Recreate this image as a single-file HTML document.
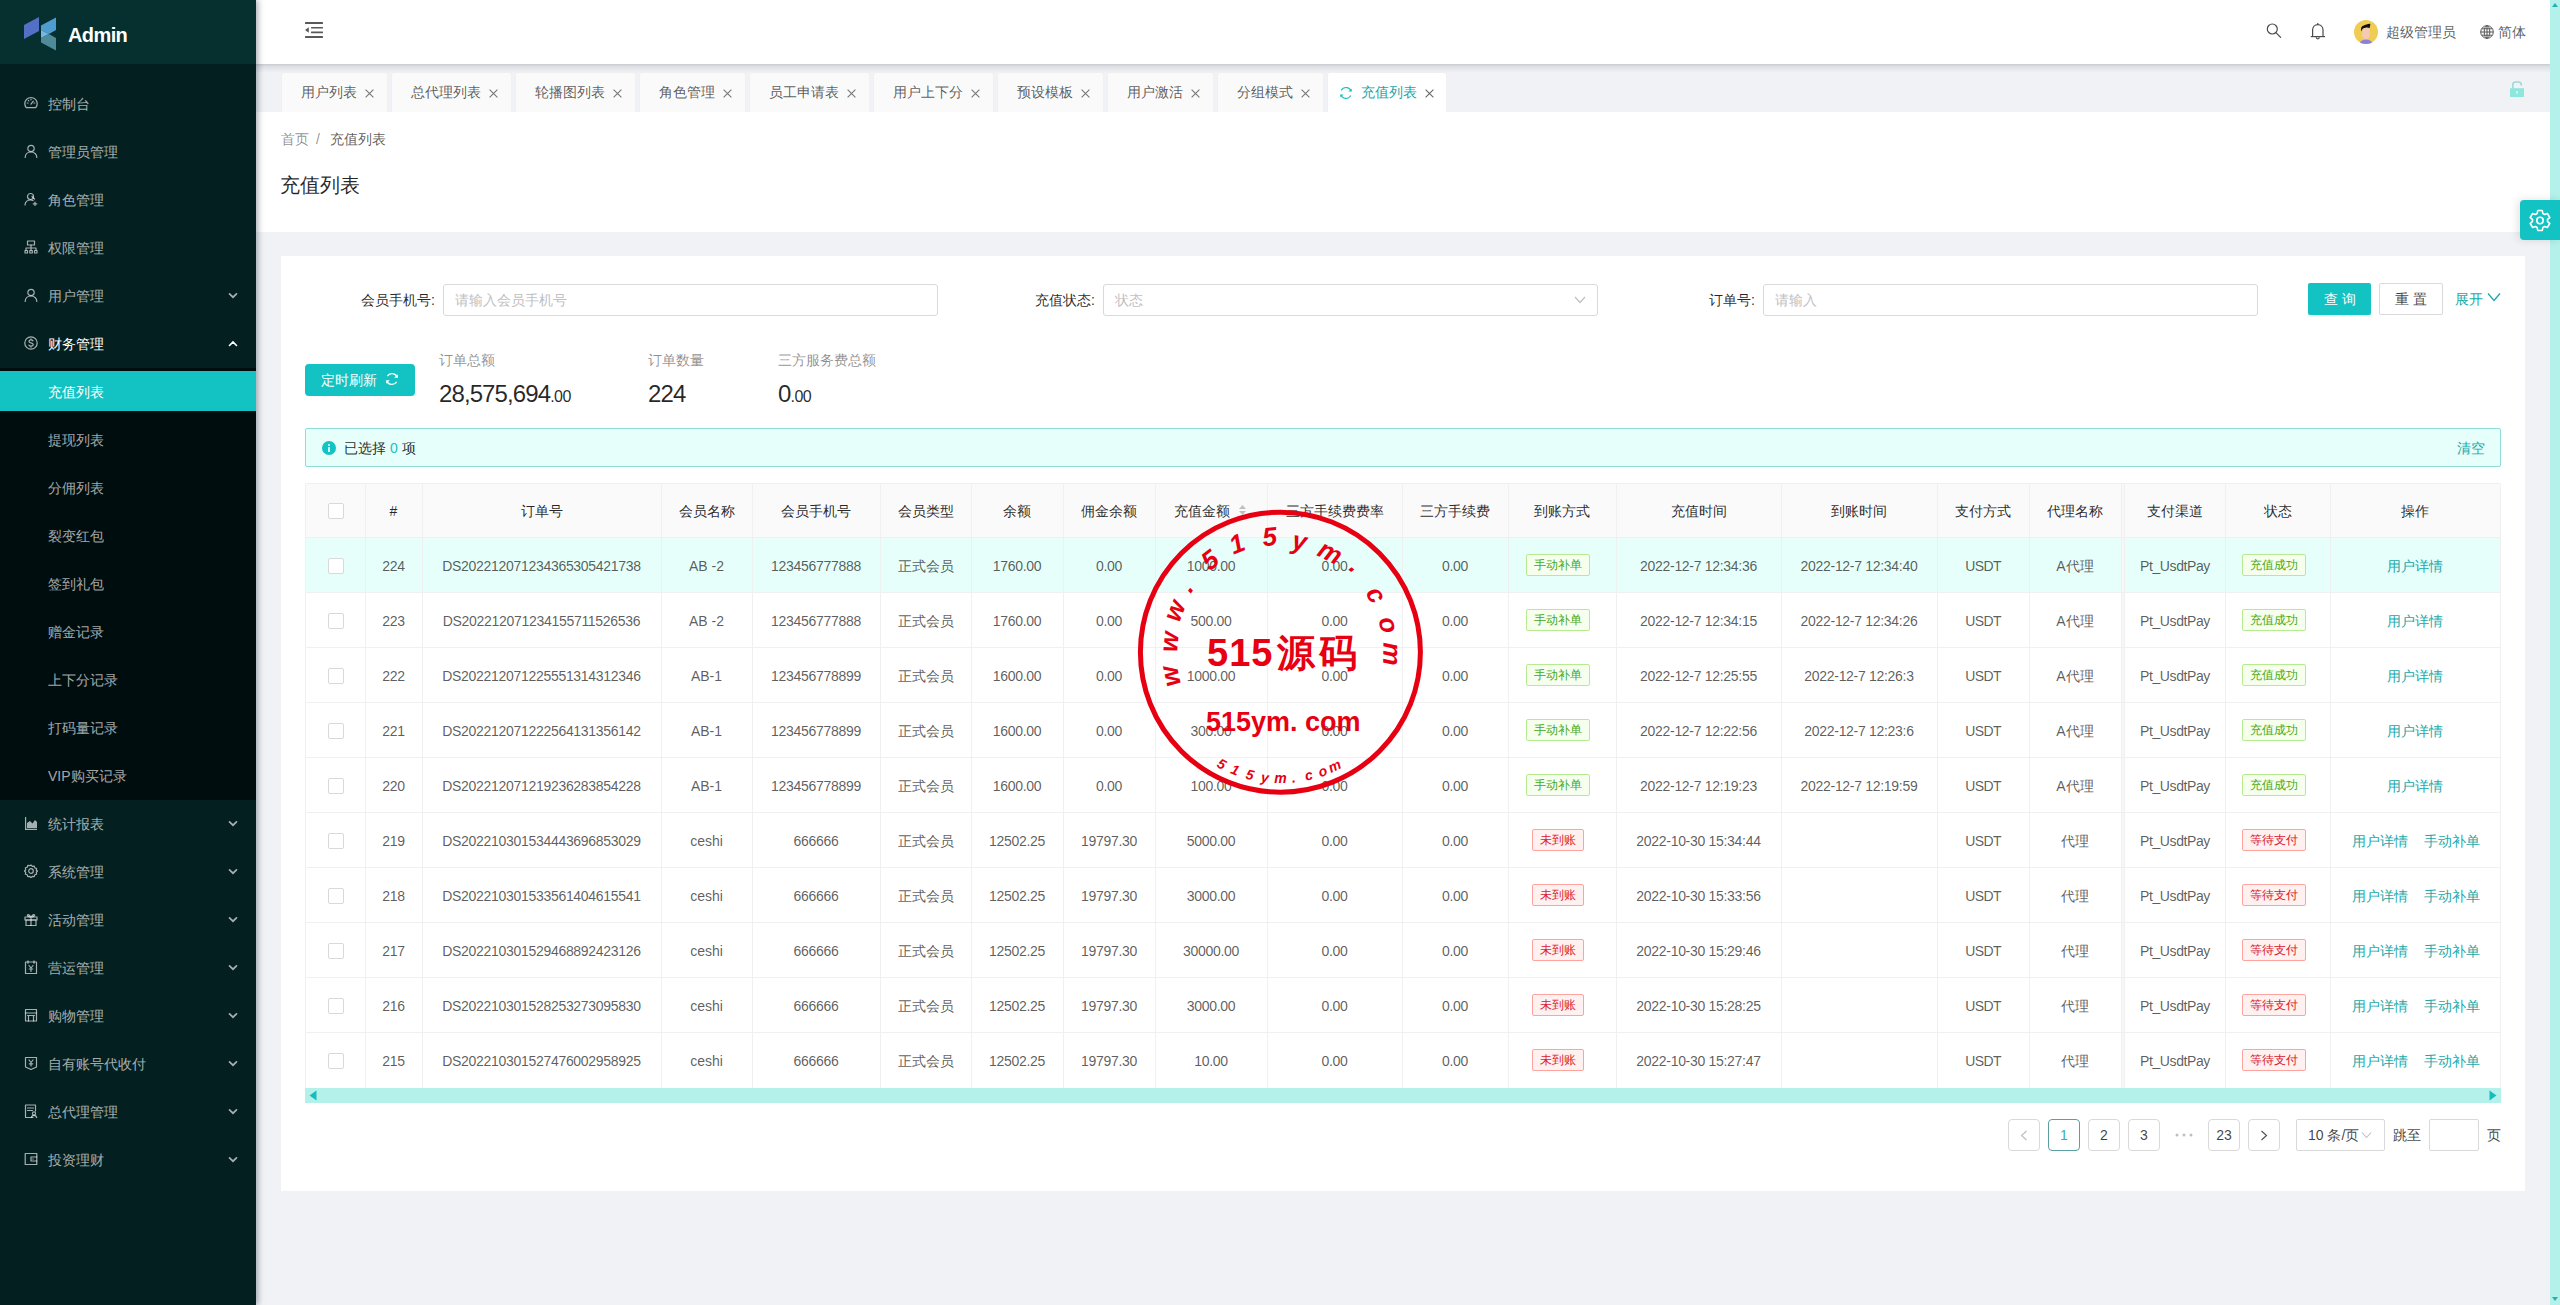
<!DOCTYPE html><html><head><meta charset="utf-8"><style>
*{box-sizing:border-box;margin:0;padding:0}
html,body{width:2560px;height:1305px;overflow:hidden;background:#f0f2f5;font-family:"Liberation Sans",sans-serif;font-size:14px;color:rgba(0,0,0,.65);font-weight:500}
.abs{position:absolute}
#side{position:absolute;left:0;top:0;width:256px;height:1305px;background:#041f20;z-index:5;box-shadow:2px 0 6px rgba(0,21,41,.35)}
#logo{position:absolute;left:0;top:0;width:256px;height:64px;background:#05302f}
#logo .t{position:absolute;left:68px;top:21px;font-size:20px;font-weight:bold;color:#fff;line-height:28px;letter-spacing:-0.6px}
.mi{position:absolute;left:0;width:256px;height:40px;line-height:40px;color:rgba(255,255,255,.65);white-space:nowrap}
.mi svg.ic{position:absolute;left:24px;top:13px}
.mi .tx{position:absolute;left:48px;top:1px}
.mi svg.ar{position:absolute;left:228px;top:17px}
.mi.on{background:#13c2c2;color:#fff}
.mi.open{color:#fff}
#sub{position:absolute;left:0;top:368px;width:256px;height:432px;background:#000d0f}
#hdr{position:absolute;left:256px;top:0;width:2294px;height:64px;background:#fff;box-shadow:0 1px 2px rgba(0,21,41,.08);z-index:3}
#tabs{position:absolute;left:256px;top:64px;width:2294px;height:48px;background:#f0f2f5}
#tsh{position:absolute;left:256px;top:64px;width:2294px;height:9px;background:linear-gradient(rgba(0,10,30,.11),rgba(0,10,30,0));z-index:2}
.tab{position:absolute;top:8px;height:40px;background:#fafafa;border:1px solid #f0f0f0;border-bottom:none;border-radius:3px 3px 0 0;line-height:40px;color:rgba(0,0,0,.65);white-space:nowrap}
.tab .tt{position:absolute;left:19px;top:-1px}
.tab svg.x{position:absolute;top:16px}
.tab.act{background:#fff;color:#13c2c2}
#ph{position:absolute;left:256px;top:112px;width:2294px;height:120px;background:#fff}
#card{position:absolute;left:281px;top:256px;width:2244px;height:935px;background:#fff}
#vs{position:absolute;left:2550px;top:0;width:10px;height:1305px;background:#b3f1ea;z-index:6}
#gear{position:absolute;left:2520px;top:200px;width:40px;height:40px;background:#13c2c2;border-radius:4px 0 0 4px;z-index:7;box-shadow:-2px 0 8px rgba(0,0,0,.12)}
.t14{font-size:14px;line-height:22px;white-space:nowrap}
</style></head><body>
<div id="side"><div id="logo">
<svg class="abs" style="left:24px;top:17px" width="33" height="34" viewBox="0 0 33 34"><polygon points="0,8 15,0 15,14 0,22" fill="#5470c6"/><polygon points="17,8.5 32,0.5 32,13 25,17 17,13" fill="#4f9dd0"/><polygon points="17,13 25,17 17,21" fill="#74b6e4"/><polygon points="17,21 25,17 32,21 32,33.5 17,25.5" fill="#4f8a9a"/></svg>
<div class="t">Admin</div></div><div id="sub"></div>
<div class="mi" style="top:83px"><svg class="ic" width="14" height="14" viewBox="0 0 14 14" ><g fill="none" stroke="rgba(255,255,255,.65)" stroke-width="1.2" stroke-linecap="round" stroke-linejoin="round"><path d="M2.2 11.6A6.2 6.2 0 1 1 11.8 11.6Z"/><path d="M7 8.2L9.3 5.2"/><path d="M3.2 7h.8M4.3 4.3l.5.5M7 3v.8M10.8 7h-.8"/></g></svg><span class="tx">控制台</span></div>
<div class="mi" style="top:131px"><svg class="ic" width="14" height="14" viewBox="0 0 14 14" ><g fill="none" stroke="rgba(255,255,255,.65)" stroke-width="1.2" stroke-linecap="round" stroke-linejoin="round"><circle cx="7" cy="4.5" r="3.2"/><path d="M1.2 13.5c0-3.3 2.6-5.5 5.8-5.5s5.8 2.2 5.8 5.5"/></g></svg><span class="tx">管理员管理</span></div>
<div class="mi" style="top:179px"><svg class="ic" width="14" height="14" viewBox="0 0 14 14" ><g fill="none" stroke="rgba(255,255,255,.65)" stroke-width="1.2" stroke-linecap="round" stroke-linejoin="round"><circle cx="6.5" cy="4.5" r="3"/><path d="M1 13c.3-3 2.5-5 5.5-5 1 0 1.8.2 2.5.6"/><path d="M8 4.5l2.5 2.5"/><path d="M11 10v3.5M9.2 11.8h3.6"/></g></svg><span class="tx">角色管理</span></div>
<div class="mi" style="top:227px"><svg class="ic" width="14" height="14" viewBox="0 0 14 14" ><g fill="none" stroke="rgba(255,255,255,.65)" stroke-width="1.2" stroke-linecap="round" stroke-linejoin="round"><rect x="3.5" y="1" width="7" height="4"/><path d="M7 5v3M2 8h10M2 8v2M7 8v2M12 8v2"/><rect x="1" y="10.5" width="2.5" height="2.5"/><rect x="5.8" y="10.5" width="2.5" height="2.5"/><rect x="10.5" y="10.5" width="2.5" height="2.5"/></g></svg><span class="tx">权限管理</span></div>
<div class="mi" style="top:275px"><svg class="ic" width="14" height="14" viewBox="0 0 14 14" ><g fill="none" stroke="rgba(255,255,255,.65)" stroke-width="1.2" stroke-linecap="round" stroke-linejoin="round"><circle cx="7" cy="4.5" r="3.2"/><path d="M1.2 13.5c0-3.3 2.6-5.5 5.8-5.5s5.8 2.2 5.8 5.5"/></g></svg><span class="tx">用户管理</span><svg class="ar" width="10" height="7" viewBox="0 0 10 7"><path d="M1.5 1.8L5 5.2l3.5-3.4" fill="none" stroke="rgba(255,255,255,.65)" stroke-width="1.7" stroke-linecap="round"/></svg></div>
<div class="mi open" style="top:323px"><svg class="ic" width="14" height="14" viewBox="0 0 14 14" ><g fill="none" stroke="rgba(255,255,255,.65)" stroke-width="1.2" stroke-linecap="round" stroke-linejoin="round"><circle cx="7" cy="7" r="6.2"/><path d="M9 4.8c-.4-.6-1.1-.9-2-.9-1.2 0-2 .6-2 1.5 0 2 4.2 1.1 4.2 3.2 0 .9-.9 1.5-2.2 1.5-.9 0-1.7-.4-2.1-1M7 2.8v1.1M7 10.1v1.1"/></g></svg><span class="tx">财务管理</span><svg class="ar" width="10" height="7" viewBox="0 0 10 7"><path d="M1.5 5.5L5 2l3.5 3.5" fill="none" stroke="#fff" stroke-width="1.6" stroke-linecap="round"/></svg></div>
<div class="mi on" style="top:371px"><span class="tx">充值列表</span></div>
<div class="mi" style="top:419px"><span class="tx">提现列表</span></div>
<div class="mi" style="top:467px"><span class="tx">分佣列表</span></div>
<div class="mi" style="top:515px"><span class="tx">裂变红包</span></div>
<div class="mi" style="top:563px"><span class="tx">签到礼包</span></div>
<div class="mi" style="top:611px"><span class="tx">赠金记录</span></div>
<div class="mi" style="top:659px"><span class="tx">上下分记录</span></div>
<div class="mi" style="top:707px"><span class="tx">打码量记录</span></div>
<div class="mi" style="top:755px"><span class="tx">VIP购买记录</span></div>
<div class="mi" style="top:803px"><svg class="ic" width="14" height="14" viewBox="0 0 14 14" ><g fill="rgba(255,255,255,.65)"><path d="M1 1h1.2v11.8H13V14H1z"/><path d="M3 12l0-5 3 -2 2.5 2.5L11 4l2 2v6z"/></g></svg><span class="tx">统计报表</span><svg class="ar" width="10" height="7" viewBox="0 0 10 7"><path d="M1.5 1.8L5 5.2l3.5-3.4" fill="none" stroke="rgba(255,255,255,.65)" stroke-width="1.7" stroke-linecap="round"/></svg></div>
<div class="mi" style="top:851px"><svg class="ic" width="14" height="14" viewBox="0 0 14 14" ><g fill="none" stroke="rgba(255,255,255,.65)" stroke-width="1.2" stroke-linecap="round" stroke-linejoin="round"><path d="M7 1l1.3 1.4 1.9-.3.6 1.8 1.8.6-.3 1.9L13.7 7l-1.4 1.3.3 1.9-1.8.6-.6 1.8-1.9-.3L7 13.7l-1.3-1.4-1.9.3-.6-1.8-1.8-.6.3-1.9L.3 7l1.4-1.3-.3-1.9 1.8-.6.6-1.8 1.9.3z"/><circle cx="7" cy="7" r="2.3"/></g></svg><span class="tx">系统管理</span><svg class="ar" width="10" height="7" viewBox="0 0 10 7"><path d="M1.5 1.8L5 5.2l3.5-3.4" fill="none" stroke="rgba(255,255,255,.65)" stroke-width="1.7" stroke-linecap="round"/></svg></div>
<div class="mi" style="top:899px"><svg class="ic" width="14" height="14" viewBox="0 0 14 14" ><g fill="none" stroke="rgba(255,255,255,.65)" stroke-width="1.2" stroke-linecap="round" stroke-linejoin="round"><rect x="1" y="5" width="12" height="3"/><rect x="2" y="8" width="10" height="5.5"/><path d="M7 5v8.5M7 5C5.5 3 4 2 3.5 3S5 5 7 5M7 5c1.5-2 3-3 3.5-2S9 5 7 5"/></g></svg><span class="tx">活动管理</span><svg class="ar" width="10" height="7" viewBox="0 0 10 7"><path d="M1.5 1.8L5 5.2l3.5-3.4" fill="none" stroke="rgba(255,255,255,.65)" stroke-width="1.7" stroke-linecap="round"/></svg></div>
<div class="mi" style="top:947px"><svg class="ic" width="14" height="14" viewBox="0 0 14 14" ><g fill="none" stroke="rgba(255,255,255,.65)" stroke-width="1.2" stroke-linecap="round" stroke-linejoin="round"><rect x="1.5" y="2" width="11" height="11.5"/><path d="M4 .8v2.4M10 .8v2.4M5 5.5L7 8l2-2.5M7 8v3.5M5.2 9h3.6"/></g></svg><span class="tx">营运管理</span><svg class="ar" width="10" height="7" viewBox="0 0 10 7"><path d="M1.5 1.8L5 5.2l3.5-3.4" fill="none" stroke="rgba(255,255,255,.65)" stroke-width="1.7" stroke-linecap="round"/></svg></div>
<div class="mi" style="top:995px"><svg class="ic" width="14" height="14" viewBox="0 0 14 14" ><g fill="none" stroke="rgba(255,255,255,.65)" stroke-width="1.2" stroke-linecap="round" stroke-linejoin="round"><rect x="1.5" y="1.5" width="11" height="11.5"/><path d="M1.5 5h11M3.5 7.5h7M4.5 7.5v5.5M9.5 7.5v5.5"/></g></svg><span class="tx">购物管理</span><svg class="ar" width="10" height="7" viewBox="0 0 10 7"><path d="M1.5 1.8L5 5.2l3.5-3.4" fill="none" stroke="rgba(255,255,255,.65)" stroke-width="1.7" stroke-linecap="round"/></svg></div>
<div class="mi" style="top:1043px"><svg class="ic" width="14" height="14" viewBox="0 0 14 14" ><g fill="none" stroke="rgba(255,255,255,.65)" stroke-width="1.2" stroke-linecap="round" stroke-linejoin="round"><path d="M1.5 1.5h11V11L7 13.5 1.5 11z"/><path d="M5 4l2 2.5L9 4M7 6.5v3.5M5.3 7.8h3.4"/></g></svg><span class="tx">自有账号代收付</span><svg class="ar" width="10" height="7" viewBox="0 0 10 7"><path d="M1.5 1.8L5 5.2l3.5-3.4" fill="none" stroke="rgba(255,255,255,.65)" stroke-width="1.7" stroke-linecap="round"/></svg></div>
<div class="mi" style="top:1091px"><svg class="ic" width="14" height="14" viewBox="0 0 14 14" ><g fill="none" stroke="rgba(255,255,255,.65)" stroke-width="1.2" stroke-linecap="round" stroke-linejoin="round"><path d="M9 13.5H1.5V1h10v6"/><path d="M3.5 4h6M3.5 6.5h5"/><circle cx="10" cy="9.5" r="1.6"/><path d="M7.3 13.8c.3-1.5 1.3-2.4 2.7-2.4s2.4.9 2.7 2.4"/></g></svg><span class="tx">总代理管理</span><svg class="ar" width="10" height="7" viewBox="0 0 10 7"><path d="M1.5 1.8L5 5.2l3.5-3.4" fill="none" stroke="rgba(255,255,255,.65)" stroke-width="1.7" stroke-linecap="round"/></svg></div>
<div class="mi" style="top:1139px"><svg class="ic" width="14" height="14" viewBox="0 0 14 14" ><g fill="none" stroke="rgba(255,255,255,.65)" stroke-width="1.2" stroke-linecap="round" stroke-linejoin="round"><rect x="1.2" y="1.5" width="11.6" height="11"/><path d="M12.8 5H7v4h5.8"/><path d="M8.8 7h.4"/></g></svg><span class="tx">投资理财</span><svg class="ar" width="10" height="7" viewBox="0 0 10 7"><path d="M1.5 1.8L5 5.2l3.5-3.4" fill="none" stroke="rgba(255,255,255,.65)" stroke-width="1.7" stroke-linecap="round"/></svg></div>
</div>
<div id="hdr">
<svg class="abs" style="left:49px;top:21px" width="20" height="18" viewBox="0 0 20 18"><g fill="#595959"><rect x="0" y="1" width="18" height="2" rx=".5"/><rect x="6" y="6" width="12" height="1.6" rx=".5"/><rect x="6" y="10.6" width="12" height="1.6" rx=".5"/><rect x="0" y="15" width="18" height="2" rx=".5"/><path d="M0 9L3.8 6.2V11.8Z"/></g></svg>
<svg class="abs" style="left:2009px;top:21px" width="20" height="20" viewBox="0 0 20 20"><g fill="none" stroke="#4a4a4a" stroke-width="1.2"><circle cx="7.3" cy="8" r="5"/><path d="M10.9 11.6L15.6 16.4" stroke-linecap="round"/></g></svg>
<svg class="abs" style="left:2054px;top:21px" width="16" height="20" viewBox="0 0 16 20"><g fill="none" stroke="#4a4a4a" stroke-width="1.2"><path d="M2.6 15.5V9c0-3.2 2.3-5.3 5.2-5.3s5.2 2.1 5.2 5.3v6.5"/><path d="M.8 15.6h14.2"/><path d="M7.8 2v1.6"/><path d="M6.3 16.3a1.5 1.5 0 0 0 3 0"/></g></svg>
<svg class="abs" style="left:2098px;top:20px" width="24" height="24" viewBox="0 0 24 24"><defs><clipPath id="cav"><circle cx="12" cy="12" r="12"/></clipPath></defs><g clip-path="url(#cav)"><rect width="24" height="24" fill="#efcd55"/><path d="M5 24c1-3 3.5-4.5 7-4.5s6 1.5 7 4.5z" fill="#8b80d8"/><path d="M8.5 8.5c0-.5.5-1.5 3.5-2 2.5-.2 3.8 1 3.8 2.5v5c0 3-1.8 5.2-3.8 5.2s-3.5-1.6-3.8-3.5z" fill="#f3cbb5"/><path d="M7.5 11.5c-.8-2.5-.6-4.5 1-5.5 1.5-1 4-1.5 6.8-2.3.8-.2 1.2.3 1 1l-.8 3.5c-.8-.6-2-.8-4-.5-1.5.2-2.6.6-3.2 1.5z" fill="#111"/></g></svg>
<div class="abs t14" style="left:2130px;top:21px;color:rgba(0,0,0,.65)">超级管理员</div>
<svg class="abs" style="left:2224px;top:25px" width="14" height="14" viewBox="0 0 14 14"><g fill="none" stroke="#555" stroke-width="1"><circle cx="7" cy="7" r="6.3"/><ellipse cx="7" cy="7" rx="2.8" ry="6.3"/><path d="M.8 7h12.4M1.8 3.8h10.4M1.8 10.2h10.4M7 .7v12.6"/></g></svg>
<div class="abs t14" style="left:2242px;top:21px;color:rgba(0,0,0,.65)">简体</div>
</div>
<div id="tsh"></div><div id="tabs">
<div class="tab" style="left:25px;width:107px"><span class="tt">用户列表</span><svg class="x" style="left:83px" width="9" height="9" viewBox="0 0 9 9"><path d="M.6 .6l7.8 7.8M8.4 .6L.6 8.4" stroke="#777" stroke-width="1.1"/></svg></div>
<div class="tab" style="left:135px;width:121px"><span class="tt">总代理列表</span><svg class="x" style="left:97px" width="9" height="9" viewBox="0 0 9 9"><path d="M.6 .6l7.8 7.8M8.4 .6L.6 8.4" stroke="#777" stroke-width="1.1"/></svg></div>
<div class="tab" style="left:259px;width:121px"><span class="tt">轮播图列表</span><svg class="x" style="left:97px" width="9" height="9" viewBox="0 0 9 9"><path d="M.6 .6l7.8 7.8M8.4 .6L.6 8.4" stroke="#777" stroke-width="1.1"/></svg></div>
<div class="tab" style="left:383px;width:107px"><span class="tt">角色管理</span><svg class="x" style="left:83px" width="9" height="9" viewBox="0 0 9 9"><path d="M.6 .6l7.8 7.8M8.4 .6L.6 8.4" stroke="#777" stroke-width="1.1"/></svg></div>
<div class="tab" style="left:493px;width:121px"><span class="tt">员工申请表</span><svg class="x" style="left:97px" width="9" height="9" viewBox="0 0 9 9"><path d="M.6 .6l7.8 7.8M8.4 .6L.6 8.4" stroke="#777" stroke-width="1.1"/></svg></div>
<div class="tab" style="left:617px;width:121px"><span class="tt">用户上下分</span><svg class="x" style="left:97px" width="9" height="9" viewBox="0 0 9 9"><path d="M.6 .6l7.8 7.8M8.4 .6L.6 8.4" stroke="#777" stroke-width="1.1"/></svg></div>
<div class="tab" style="left:741px;width:107px"><span class="tt">预设模板</span><svg class="x" style="left:83px" width="9" height="9" viewBox="0 0 9 9"><path d="M.6 .6l7.8 7.8M8.4 .6L.6 8.4" stroke="#777" stroke-width="1.1"/></svg></div>
<div class="tab" style="left:851px;width:107px"><span class="tt">用户激活</span><svg class="x" style="left:83px" width="9" height="9" viewBox="0 0 9 9"><path d="M.6 .6l7.8 7.8M8.4 .6L.6 8.4" stroke="#777" stroke-width="1.1"/></svg></div>
<div class="tab" style="left:961px;width:107px"><span class="tt">分组模式</span><svg class="x" style="left:83px" width="9" height="9" viewBox="0 0 9 9"><path d="M.6 .6l7.8 7.8M8.4 .6L.6 8.4" stroke="#777" stroke-width="1.1"/></svg></div>
<div class="tab act" style="left:1071px;width:120px"><svg class="abs" style="left:11px;top:13px" width="14" height="14" viewBox="0 0 14 14"><g fill="none" stroke="#13c2c2" stroke-width="1.1"><path d="M12.3 5.2A5.6 5.6 0 0 0 2.2 4.4"/><path d="M1.7 8.8a5.6 5.6 0 0 0 10.1.8"/></g><path d="M12.6 2.4v3.2H9.4z" fill="#13c2c2"/><path d="M1.4 11.6V8.4h3.2z" fill="#13c2c2"/></svg><span class="tt" style="left:33px;color:#1aa6a6">充值列表</span><svg class="x" style="left:97px" width="9" height="9" viewBox="0 0 9 9"><path d="M.6 .6l7.8 7.8M8.4 .6L.6 8.4" stroke="#666" stroke-width="1.1"/></svg></div>
<svg class="abs" style="left:2254px;top:17px" width="14" height="17" viewBox="0 0 14 17"><path d="M2.8 7.5V3.8C2.8 2 4 1 5.5 1h3c1.6 0 2.8 1.2 2.8 2.8v.8" fill="none" stroke="#9fd8d4" stroke-width="1.6"/><rect x="0" y="7.2" width="14" height="8.8" fill="#8ee6dd"/><rect x="6.2" y="10" width="1.6" height="2.8" fill="#c8fff8"/></svg>
</div>
<div id="ph">
<div class="abs t14" style="left:25px;top:16px;color:rgba(0,0,0,.45)">首页</div>
<div class="abs t14" style="left:60px;top:16px;color:rgba(0,0,0,.45)">/</div>
<div class="abs t14" style="left:74px;top:16px;color:rgba(0,0,0,.65)">充值列表</div>
<div class="abs" style="left:24px;top:59px;font-size:20px;line-height:28px;color:rgba(0,0,0,.85)">充值列表</div>
</div>
<div id="card"></div>
<div class="abs t14" style="right:2125px;top:289px;color:rgba(0,0,0,.85)">会员手机号:</div>
<div class="abs" style="left:443px;top:284px;width:495px;height:32px;border:1px solid #d9d9d9;border-radius:3px;background:#fff"></div>
<div class="abs t14" style="left:455px;top:289px;color:#bfbfbf">请输入会员手机号</div>
<div class="abs t14" style="right:1465px;top:289px;color:rgba(0,0,0,.85)">充值状态:</div>
<div class="abs" style="left:1103px;top:284px;width:495px;height:32px;border:1px solid #d9d9d9;border-radius:3px;background:#fff"></div>
<div class="abs t14" style="left:1115px;top:289px;color:#bfbfbf">状态</div>
<svg class="abs" style="left:1574px;top:295px" width="12" height="10" viewBox="0 0 12 10"><path d="M1 2l5 5.5L11 2" fill="none" stroke="#bfbfbf" stroke-width="1.2"/></svg>
<div class="abs t14" style="right:805px;top:289px;color:rgba(0,0,0,.85)">订单号:</div>
<div class="abs" style="left:1763px;top:284px;width:495px;height:32px;border:1px solid #d9d9d9;border-radius:3px;background:#fff"></div>
<div class="abs t14" style="left:1775px;top:289px;color:#bfbfbf">请输入</div>
<div class="abs" style="left:2308px;top:283px;width:63px;height:32px;background:#13c2c2;border-radius:2px;box-shadow:0 2px 0 rgba(0,0,0,.045)"></div>
<div class="abs t14" style="left:2324px;top:288px;color:#fff;letter-spacing:0px">查&nbsp;询</div>
<div class="abs" style="left:2379px;top:283px;width:64px;height:32px;background:#fff;border:1px solid #d9d9d9;border-radius:2px"></div>
<div class="abs t14" style="left:2395px;top:288px;color:rgba(0,0,0,.75)">重&nbsp;置</div>
<div class="abs t14" style="left:2455px;top:288px;color:#1aa9a9">展开</div>
<svg class="abs" style="left:2487px;top:292px" width="14" height="11" viewBox="0 0 14 11"><path d="M1 1.5l6 7 6-7" fill="none" stroke="#1aa9a9" stroke-width="1.3"/></svg>
<div class="abs" style="left:305px;top:364px;width:110px;height:32px;background:#13c2c2;border-radius:4px"></div>
<div class="abs t14" style="left:321px;top:369px;color:#fff">定时刷新</div>
<svg class="abs" style="left:385px;top:372px" width="14" height="14" viewBox="0 0 14 14"><g fill="none" stroke="#fff" stroke-width="1.3"><path d="M12.2 5.3A5.4 5.4 0 0 0 2.4 4.2"/><path d="M1.8 8.7a5.4 5.4 0 0 0 9.8 1.1"/></g><path d="M12.8 2.2v3.6H9.2z" fill="#fff"/><path d="M1.2 11.8V8.2h3.6z" fill="#fff"/></svg>
<div class="abs t14" style="left:439px;top:349px;color:rgba(0,0,0,.45)">订单总额</div>
<div class="abs t14" style="left:648px;top:349px;color:rgba(0,0,0,.45)">订单数量</div>
<div class="abs t14" style="left:778px;top:349px;color:rgba(0,0,0,.45)">三方服务费总额</div>
<div class="abs" style="left:439px;top:378px;font-size:24px;line-height:32px;color:rgba(0,0,0,.85);letter-spacing:-0.9px;white-space:nowrap">28,575,694<span style="font-size:16px;letter-spacing:-0.5px">.00</span></div>
<div class="abs" style="left:648px;top:378px;font-size:24px;line-height:32px;color:rgba(0,0,0,.85);letter-spacing:-0.9px">224</div>
<div class="abs" style="left:778px;top:378px;font-size:24px;line-height:32px;color:rgba(0,0,0,.85);letter-spacing:-0.9px;white-space:nowrap">0<span style="font-size:16px;letter-spacing:-0.5px">.00</span></div>
<div class="abs" style="left:305px;top:428px;width:2196px;height:39px;background:#e6fffb;border:1px solid #8edcd6;border-radius:2px"></div>
<svg class="abs" style="left:322px;top:441px" width="14" height="14" viewBox="0 0 14 14"><circle cx="7" cy="7" r="7" fill="#13c2c2"/><rect x="6.2" y="6" width="1.6" height="5" fill="#fff"/><circle cx="7" cy="4" r=".9" fill="#fff"/></svg>
<div class="abs t14" style="left:344px;top:437px;color:rgba(0,0,0,.85)">已选择 <span style="color:#13c2c2">0</span> 项</div>
<div class="abs t14" style="left:2457px;top:437px;color:#1aa9a9">清空</div>
<div class="abs" style="left:305px;top:483px;width:2196px;height:605px;border:1px solid #f0f0f0;border-bottom:none;border-radius:2px 2px 0 0;background:#fff"></div>
<div class="abs" style="left:306px;top:484px;width:2194px;height:53px;background:#fafafa"></div>
<div class="abs" style="left:306px;top:538px;width:2194px;height:54px;background:#e6fffb"></div>
<div class="abs" style="left:365px;top:484px;width:1px;height:604px;background:#f0f0f0"></div>
<div class="abs" style="left:422px;top:484px;width:1px;height:604px;background:#f0f0f0"></div>
<div class="abs" style="left:661px;top:484px;width:1px;height:604px;background:#f0f0f0"></div>
<div class="abs" style="left:752px;top:484px;width:1px;height:604px;background:#f0f0f0"></div>
<div class="abs" style="left:880px;top:484px;width:1px;height:604px;background:#f0f0f0"></div>
<div class="abs" style="left:971px;top:484px;width:1px;height:604px;background:#f0f0f0"></div>
<div class="abs" style="left:1063px;top:484px;width:1px;height:604px;background:#f0f0f0"></div>
<div class="abs" style="left:1155px;top:484px;width:1px;height:604px;background:#f0f0f0"></div>
<div class="abs" style="left:1267px;top:484px;width:1px;height:604px;background:#f0f0f0"></div>
<div class="abs" style="left:1402px;top:484px;width:1px;height:604px;background:#f0f0f0"></div>
<div class="abs" style="left:1508px;top:484px;width:1px;height:604px;background:#f0f0f0"></div>
<div class="abs" style="left:1616px;top:484px;width:1px;height:604px;background:#f0f0f0"></div>
<div class="abs" style="left:1781px;top:484px;width:1px;height:604px;background:#f0f0f0"></div>
<div class="abs" style="left:1937px;top:484px;width:1px;height:604px;background:#f0f0f0"></div>
<div class="abs" style="left:2029px;top:484px;width:1px;height:604px;background:#f0f0f0"></div>
<div class="abs" style="left:2121px;top:484px;width:1px;height:604px;background:#f0f0f0"></div>
<div class="abs" style="left:2225px;top:484px;width:1px;height:604px;background:#f0f0f0"></div>
<div class="abs" style="left:2330px;top:484px;width:1px;height:604px;background:#f0f0f0"></div>
<div class="abs" style="left:2122px;top:484px;width:2px;height:604px;background:#f7f7f7"></div>
<div class="abs" style="left:2124px;top:484px;width:1px;height:604px;background:#f0f0f0"></div>
<div class="abs" style="left:306px;top:537px;width:2194px;height:1px;background:#f0f0f0"></div>
<div class="abs" style="left:306px;top:592px;width:2194px;height:1px;background:#f0f0f0"></div>
<div class="abs" style="left:306px;top:647px;width:2194px;height:1px;background:#f0f0f0"></div>
<div class="abs" style="left:306px;top:702px;width:2194px;height:1px;background:#f0f0f0"></div>
<div class="abs" style="left:306px;top:757px;width:2194px;height:1px;background:#f0f0f0"></div>
<div class="abs" style="left:306px;top:812px;width:2194px;height:1px;background:#f0f0f0"></div>
<div class="abs" style="left:306px;top:867px;width:2194px;height:1px;background:#f0f0f0"></div>
<div class="abs" style="left:306px;top:922px;width:2194px;height:1px;background:#f0f0f0"></div>
<div class="abs" style="left:306px;top:977px;width:2194px;height:1px;background:#f0f0f0"></div>
<div class="abs" style="left:306px;top:1032px;width:2194px;height:1px;background:#f0f0f0"></div>
<div class="abs" style="left:328px;top:503px;width:16px;height:16px;border:1px solid #d9d9d9;border-radius:2px;background:#fff"></div>
<div class="abs t14" style="left:365px;top:500px;width:57px;text-align:center;color:rgba(0,0,0,.85)">#</div>
<div class="abs t14" style="left:422px;top:500px;width:239px;text-align:center;color:rgba(0,0,0,.85)">订单号</div>
<div class="abs t14" style="left:661px;top:500px;width:91px;text-align:center;color:rgba(0,0,0,.85)">会员名称</div>
<div class="abs t14" style="left:752px;top:500px;width:128px;text-align:center;color:rgba(0,0,0,.85)">会员手机号</div>
<div class="abs t14" style="left:880px;top:500px;width:91px;text-align:center;color:rgba(0,0,0,.85)">会员类型</div>
<div class="abs t14" style="left:971px;top:500px;width:92px;text-align:center;color:rgba(0,0,0,.85)">余额</div>
<div class="abs t14" style="left:1063px;top:500px;width:92px;text-align:center;color:rgba(0,0,0,.85)">佣金余额</div>
<div class="abs t14" style="left:1174px;top:500px;color:rgba(0,0,0,.85)">充值金额</div>
<svg class="abs" style="left:1238px;top:504px" width="9" height="12" viewBox="0 0 9 12"><path d="M4.5 1L8 5H1z" fill="#bfbfbf"/><path d="M4.5 11L8 7H1z" fill="#bfbfbf"/></svg>
<div class="abs t14" style="left:1267px;top:500px;width:135px;text-align:center;color:rgba(0,0,0,.85)">三方手续费费率</div>
<div class="abs t14" style="left:1402px;top:500px;width:106px;text-align:center;color:rgba(0,0,0,.85)">三方手续费</div>
<div class="abs t14" style="left:1508px;top:500px;width:108px;text-align:center;color:rgba(0,0,0,.85)">到账方式</div>
<div class="abs t14" style="left:1616px;top:500px;width:165px;text-align:center;color:rgba(0,0,0,.85)">充值时间</div>
<div class="abs t14" style="left:1781px;top:500px;width:156px;text-align:center;color:rgba(0,0,0,.85)">到账时间</div>
<div class="abs t14" style="left:1937px;top:500px;width:92px;text-align:center;color:rgba(0,0,0,.85)">支付方式</div>
<div class="abs t14" style="left:2029px;top:500px;width:92px;text-align:center;color:rgba(0,0,0,.85)">代理名称</div>
<div class="abs t14" style="left:2123px;top:500px;width:104px;text-align:center;color:rgba(0,0,0,.85)">支付渠道</div>
<div class="abs t14" style="left:2225px;top:500px;width:105px;text-align:center;color:rgba(0,0,0,.85)">状态</div>
<div class="abs t14" style="left:2330px;top:500px;width:170px;text-align:center;color:rgba(0,0,0,.85)">操作</div>
<div class="abs" style="left:328px;top:558px;width:16px;height:16px;border:1px solid #d9d9d9;border-radius:2px;background:#fff"></div>
<div class="abs t14" style="left:365px;top:555px;width:57px;text-align:center;color:rgba(0,0,0,.65);letter-spacing:-0.3px">224</div>
<div class="abs t14" style="left:422px;top:555px;width:239px;text-align:center;color:rgba(0,0,0,.65);letter-spacing:-0.3px">DS202212071234365305421738</div>
<div class="abs t14" style="left:661px;top:555px;width:91px;text-align:center;color:rgba(0,0,0,.65)">AB -2</div>
<div class="abs t14" style="left:752px;top:555px;width:128px;text-align:center;color:rgba(0,0,0,.65);letter-spacing:-0.3px">123456777888</div>
<div class="abs t14" style="left:880px;top:555px;width:91px;text-align:center;color:rgba(0,0,0,.65)">正式会员</div>
<div class="abs t14" style="left:971px;top:555px;width:92px;text-align:center;color:rgba(0,0,0,.65);letter-spacing:-0.3px">1760.00</div>
<div class="abs t14" style="left:1063px;top:555px;width:92px;text-align:center;color:rgba(0,0,0,.65);letter-spacing:-0.3px">0.00</div>
<div class="abs t14" style="left:1155px;top:555px;width:112px;text-align:center;color:rgba(0,0,0,.65);letter-spacing:-0.3px">1000.00</div>
<div class="abs t14" style="left:1267px;top:555px;width:135px;text-align:center;color:rgba(0,0,0,.65);letter-spacing:-0.3px">0.00</div>
<div class="abs t14" style="left:1402px;top:555px;width:106px;text-align:center;color:rgba(0,0,0,.65);letter-spacing:-0.3px">0.00</div>
<div class="abs" style="left:1508px;top:554px;width:108px;text-align:center"><span style="display:inline-block;height:22px;line-height:20px;padding:0 7px;margin-right:8px;font-size:12px;border-radius:2px;background:#f6ffed;border:1px solid #b7eb8f;color:#46a81a">手动补单</span></div>
<div class="abs t14" style="left:1616px;top:555px;width:165px;text-align:center;color:rgba(0,0,0,.65);letter-spacing:-0.3px">2022-12-7 12:34:36</div>
<div class="abs t14" style="left:1781px;top:555px;width:156px;text-align:center;color:rgba(0,0,0,.65);letter-spacing:-0.3px">2022-12-7 12:34:40</div>
<div class="abs t14" style="left:1937px;top:555px;width:92px;text-align:center;color:rgba(0,0,0,.65);letter-spacing:-0.6px">USDT</div>
<div class="abs t14" style="left:2029px;top:555px;width:92px;text-align:center;color:rgba(0,0,0,.65)">A代理</div>
<div class="abs t14" style="left:2123px;top:555px;width:104px;text-align:center;color:rgba(0,0,0,.65);letter-spacing:-0.4px">Pt_UsdtPay</div>
<div class="abs" style="left:2225px;top:554px;width:105px;text-align:center"><span style="display:inline-block;height:22px;line-height:20px;padding:0 7px;margin-right:8px;font-size:12px;border-radius:2px;background:#f6ffed;border:1px solid #b7eb8f;color:#46a81a">充值成功</span></div>
<div class="abs t14" style="left:2330px;top:555px;width:170px;text-align:center;color:#1aa9a9">用户详情</div>
<div class="abs" style="left:328px;top:613px;width:16px;height:16px;border:1px solid #d9d9d9;border-radius:2px;background:#fff"></div>
<div class="abs t14" style="left:365px;top:610px;width:57px;text-align:center;color:rgba(0,0,0,.65);letter-spacing:-0.3px">223</div>
<div class="abs t14" style="left:422px;top:610px;width:239px;text-align:center;color:rgba(0,0,0,.65);letter-spacing:-0.3px">DS202212071234155711526536</div>
<div class="abs t14" style="left:661px;top:610px;width:91px;text-align:center;color:rgba(0,0,0,.65)">AB -2</div>
<div class="abs t14" style="left:752px;top:610px;width:128px;text-align:center;color:rgba(0,0,0,.65);letter-spacing:-0.3px">123456777888</div>
<div class="abs t14" style="left:880px;top:610px;width:91px;text-align:center;color:rgba(0,0,0,.65)">正式会员</div>
<div class="abs t14" style="left:971px;top:610px;width:92px;text-align:center;color:rgba(0,0,0,.65);letter-spacing:-0.3px">1760.00</div>
<div class="abs t14" style="left:1063px;top:610px;width:92px;text-align:center;color:rgba(0,0,0,.65);letter-spacing:-0.3px">0.00</div>
<div class="abs t14" style="left:1155px;top:610px;width:112px;text-align:center;color:rgba(0,0,0,.65);letter-spacing:-0.3px">500.00</div>
<div class="abs t14" style="left:1267px;top:610px;width:135px;text-align:center;color:rgba(0,0,0,.65);letter-spacing:-0.3px">0.00</div>
<div class="abs t14" style="left:1402px;top:610px;width:106px;text-align:center;color:rgba(0,0,0,.65);letter-spacing:-0.3px">0.00</div>
<div class="abs" style="left:1508px;top:609px;width:108px;text-align:center"><span style="display:inline-block;height:22px;line-height:20px;padding:0 7px;margin-right:8px;font-size:12px;border-radius:2px;background:#f6ffed;border:1px solid #b7eb8f;color:#46a81a">手动补单</span></div>
<div class="abs t14" style="left:1616px;top:610px;width:165px;text-align:center;color:rgba(0,0,0,.65);letter-spacing:-0.3px">2022-12-7 12:34:15</div>
<div class="abs t14" style="left:1781px;top:610px;width:156px;text-align:center;color:rgba(0,0,0,.65);letter-spacing:-0.3px">2022-12-7 12:34:26</div>
<div class="abs t14" style="left:1937px;top:610px;width:92px;text-align:center;color:rgba(0,0,0,.65);letter-spacing:-0.6px">USDT</div>
<div class="abs t14" style="left:2029px;top:610px;width:92px;text-align:center;color:rgba(0,0,0,.65)">A代理</div>
<div class="abs t14" style="left:2123px;top:610px;width:104px;text-align:center;color:rgba(0,0,0,.65);letter-spacing:-0.4px">Pt_UsdtPay</div>
<div class="abs" style="left:2225px;top:609px;width:105px;text-align:center"><span style="display:inline-block;height:22px;line-height:20px;padding:0 7px;margin-right:8px;font-size:12px;border-radius:2px;background:#f6ffed;border:1px solid #b7eb8f;color:#46a81a">充值成功</span></div>
<div class="abs t14" style="left:2330px;top:610px;width:170px;text-align:center;color:#1aa9a9">用户详情</div>
<div class="abs" style="left:328px;top:668px;width:16px;height:16px;border:1px solid #d9d9d9;border-radius:2px;background:#fff"></div>
<div class="abs t14" style="left:365px;top:665px;width:57px;text-align:center;color:rgba(0,0,0,.65);letter-spacing:-0.3px">222</div>
<div class="abs t14" style="left:422px;top:665px;width:239px;text-align:center;color:rgba(0,0,0,.65);letter-spacing:-0.3px">DS202212071225551314312346</div>
<div class="abs t14" style="left:661px;top:665px;width:91px;text-align:center;color:rgba(0,0,0,.65)">AB-1</div>
<div class="abs t14" style="left:752px;top:665px;width:128px;text-align:center;color:rgba(0,0,0,.65);letter-spacing:-0.3px">123456778899</div>
<div class="abs t14" style="left:880px;top:665px;width:91px;text-align:center;color:rgba(0,0,0,.65)">正式会员</div>
<div class="abs t14" style="left:971px;top:665px;width:92px;text-align:center;color:rgba(0,0,0,.65);letter-spacing:-0.3px">1600.00</div>
<div class="abs t14" style="left:1063px;top:665px;width:92px;text-align:center;color:rgba(0,0,0,.65);letter-spacing:-0.3px">0.00</div>
<div class="abs t14" style="left:1155px;top:665px;width:112px;text-align:center;color:rgba(0,0,0,.65);letter-spacing:-0.3px">1000.00</div>
<div class="abs t14" style="left:1267px;top:665px;width:135px;text-align:center;color:rgba(0,0,0,.65);letter-spacing:-0.3px">0.00</div>
<div class="abs t14" style="left:1402px;top:665px;width:106px;text-align:center;color:rgba(0,0,0,.65);letter-spacing:-0.3px">0.00</div>
<div class="abs" style="left:1508px;top:664px;width:108px;text-align:center"><span style="display:inline-block;height:22px;line-height:20px;padding:0 7px;margin-right:8px;font-size:12px;border-radius:2px;background:#f6ffed;border:1px solid #b7eb8f;color:#46a81a">手动补单</span></div>
<div class="abs t14" style="left:1616px;top:665px;width:165px;text-align:center;color:rgba(0,0,0,.65);letter-spacing:-0.3px">2022-12-7 12:25:55</div>
<div class="abs t14" style="left:1781px;top:665px;width:156px;text-align:center;color:rgba(0,0,0,.65);letter-spacing:-0.3px">2022-12-7 12:26:3</div>
<div class="abs t14" style="left:1937px;top:665px;width:92px;text-align:center;color:rgba(0,0,0,.65);letter-spacing:-0.6px">USDT</div>
<div class="abs t14" style="left:2029px;top:665px;width:92px;text-align:center;color:rgba(0,0,0,.65)">A代理</div>
<div class="abs t14" style="left:2123px;top:665px;width:104px;text-align:center;color:rgba(0,0,0,.65);letter-spacing:-0.4px">Pt_UsdtPay</div>
<div class="abs" style="left:2225px;top:664px;width:105px;text-align:center"><span style="display:inline-block;height:22px;line-height:20px;padding:0 7px;margin-right:8px;font-size:12px;border-radius:2px;background:#f6ffed;border:1px solid #b7eb8f;color:#46a81a">充值成功</span></div>
<div class="abs t14" style="left:2330px;top:665px;width:170px;text-align:center;color:#1aa9a9">用户详情</div>
<div class="abs" style="left:328px;top:723px;width:16px;height:16px;border:1px solid #d9d9d9;border-radius:2px;background:#fff"></div>
<div class="abs t14" style="left:365px;top:720px;width:57px;text-align:center;color:rgba(0,0,0,.65);letter-spacing:-0.3px">221</div>
<div class="abs t14" style="left:422px;top:720px;width:239px;text-align:center;color:rgba(0,0,0,.65);letter-spacing:-0.3px">DS202212071222564131356142</div>
<div class="abs t14" style="left:661px;top:720px;width:91px;text-align:center;color:rgba(0,0,0,.65)">AB-1</div>
<div class="abs t14" style="left:752px;top:720px;width:128px;text-align:center;color:rgba(0,0,0,.65);letter-spacing:-0.3px">123456778899</div>
<div class="abs t14" style="left:880px;top:720px;width:91px;text-align:center;color:rgba(0,0,0,.65)">正式会员</div>
<div class="abs t14" style="left:971px;top:720px;width:92px;text-align:center;color:rgba(0,0,0,.65);letter-spacing:-0.3px">1600.00</div>
<div class="abs t14" style="left:1063px;top:720px;width:92px;text-align:center;color:rgba(0,0,0,.65);letter-spacing:-0.3px">0.00</div>
<div class="abs t14" style="left:1155px;top:720px;width:112px;text-align:center;color:rgba(0,0,0,.65);letter-spacing:-0.3px">300.00</div>
<div class="abs t14" style="left:1267px;top:720px;width:135px;text-align:center;color:rgba(0,0,0,.65);letter-spacing:-0.3px">0.00</div>
<div class="abs t14" style="left:1402px;top:720px;width:106px;text-align:center;color:rgba(0,0,0,.65);letter-spacing:-0.3px">0.00</div>
<div class="abs" style="left:1508px;top:719px;width:108px;text-align:center"><span style="display:inline-block;height:22px;line-height:20px;padding:0 7px;margin-right:8px;font-size:12px;border-radius:2px;background:#f6ffed;border:1px solid #b7eb8f;color:#46a81a">手动补单</span></div>
<div class="abs t14" style="left:1616px;top:720px;width:165px;text-align:center;color:rgba(0,0,0,.65);letter-spacing:-0.3px">2022-12-7 12:22:56</div>
<div class="abs t14" style="left:1781px;top:720px;width:156px;text-align:center;color:rgba(0,0,0,.65);letter-spacing:-0.3px">2022-12-7 12:23:6</div>
<div class="abs t14" style="left:1937px;top:720px;width:92px;text-align:center;color:rgba(0,0,0,.65);letter-spacing:-0.6px">USDT</div>
<div class="abs t14" style="left:2029px;top:720px;width:92px;text-align:center;color:rgba(0,0,0,.65)">A代理</div>
<div class="abs t14" style="left:2123px;top:720px;width:104px;text-align:center;color:rgba(0,0,0,.65);letter-spacing:-0.4px">Pt_UsdtPay</div>
<div class="abs" style="left:2225px;top:719px;width:105px;text-align:center"><span style="display:inline-block;height:22px;line-height:20px;padding:0 7px;margin-right:8px;font-size:12px;border-radius:2px;background:#f6ffed;border:1px solid #b7eb8f;color:#46a81a">充值成功</span></div>
<div class="abs t14" style="left:2330px;top:720px;width:170px;text-align:center;color:#1aa9a9">用户详情</div>
<div class="abs" style="left:328px;top:778px;width:16px;height:16px;border:1px solid #d9d9d9;border-radius:2px;background:#fff"></div>
<div class="abs t14" style="left:365px;top:775px;width:57px;text-align:center;color:rgba(0,0,0,.65);letter-spacing:-0.3px">220</div>
<div class="abs t14" style="left:422px;top:775px;width:239px;text-align:center;color:rgba(0,0,0,.65);letter-spacing:-0.3px">DS202212071219236283854228</div>
<div class="abs t14" style="left:661px;top:775px;width:91px;text-align:center;color:rgba(0,0,0,.65)">AB-1</div>
<div class="abs t14" style="left:752px;top:775px;width:128px;text-align:center;color:rgba(0,0,0,.65);letter-spacing:-0.3px">123456778899</div>
<div class="abs t14" style="left:880px;top:775px;width:91px;text-align:center;color:rgba(0,0,0,.65)">正式会员</div>
<div class="abs t14" style="left:971px;top:775px;width:92px;text-align:center;color:rgba(0,0,0,.65);letter-spacing:-0.3px">1600.00</div>
<div class="abs t14" style="left:1063px;top:775px;width:92px;text-align:center;color:rgba(0,0,0,.65);letter-spacing:-0.3px">0.00</div>
<div class="abs t14" style="left:1155px;top:775px;width:112px;text-align:center;color:rgba(0,0,0,.65);letter-spacing:-0.3px">100.00</div>
<div class="abs t14" style="left:1267px;top:775px;width:135px;text-align:center;color:rgba(0,0,0,.65);letter-spacing:-0.3px">0.00</div>
<div class="abs t14" style="left:1402px;top:775px;width:106px;text-align:center;color:rgba(0,0,0,.65);letter-spacing:-0.3px">0.00</div>
<div class="abs" style="left:1508px;top:774px;width:108px;text-align:center"><span style="display:inline-block;height:22px;line-height:20px;padding:0 7px;margin-right:8px;font-size:12px;border-radius:2px;background:#f6ffed;border:1px solid #b7eb8f;color:#46a81a">手动补单</span></div>
<div class="abs t14" style="left:1616px;top:775px;width:165px;text-align:center;color:rgba(0,0,0,.65);letter-spacing:-0.3px">2022-12-7 12:19:23</div>
<div class="abs t14" style="left:1781px;top:775px;width:156px;text-align:center;color:rgba(0,0,0,.65);letter-spacing:-0.3px">2022-12-7 12:19:59</div>
<div class="abs t14" style="left:1937px;top:775px;width:92px;text-align:center;color:rgba(0,0,0,.65);letter-spacing:-0.6px">USDT</div>
<div class="abs t14" style="left:2029px;top:775px;width:92px;text-align:center;color:rgba(0,0,0,.65)">A代理</div>
<div class="abs t14" style="left:2123px;top:775px;width:104px;text-align:center;color:rgba(0,0,0,.65);letter-spacing:-0.4px">Pt_UsdtPay</div>
<div class="abs" style="left:2225px;top:774px;width:105px;text-align:center"><span style="display:inline-block;height:22px;line-height:20px;padding:0 7px;margin-right:8px;font-size:12px;border-radius:2px;background:#f6ffed;border:1px solid #b7eb8f;color:#46a81a">充值成功</span></div>
<div class="abs t14" style="left:2330px;top:775px;width:170px;text-align:center;color:#1aa9a9">用户详情</div>
<div class="abs" style="left:328px;top:833px;width:16px;height:16px;border:1px solid #d9d9d9;border-radius:2px;background:#fff"></div>
<div class="abs t14" style="left:365px;top:830px;width:57px;text-align:center;color:rgba(0,0,0,.65);letter-spacing:-0.3px">219</div>
<div class="abs t14" style="left:422px;top:830px;width:239px;text-align:center;color:rgba(0,0,0,.65);letter-spacing:-0.3px">DS202210301534443696853029</div>
<div class="abs t14" style="left:661px;top:830px;width:91px;text-align:center;color:rgba(0,0,0,.65)">ceshi</div>
<div class="abs t14" style="left:752px;top:830px;width:128px;text-align:center;color:rgba(0,0,0,.65);letter-spacing:-0.3px">666666</div>
<div class="abs t14" style="left:880px;top:830px;width:91px;text-align:center;color:rgba(0,0,0,.65)">正式会员</div>
<div class="abs t14" style="left:971px;top:830px;width:92px;text-align:center;color:rgba(0,0,0,.65);letter-spacing:-0.3px">12502.25</div>
<div class="abs t14" style="left:1063px;top:830px;width:92px;text-align:center;color:rgba(0,0,0,.65);letter-spacing:-0.3px">19797.30</div>
<div class="abs t14" style="left:1155px;top:830px;width:112px;text-align:center;color:rgba(0,0,0,.65);letter-spacing:-0.3px">5000.00</div>
<div class="abs t14" style="left:1267px;top:830px;width:135px;text-align:center;color:rgba(0,0,0,.65);letter-spacing:-0.3px">0.00</div>
<div class="abs t14" style="left:1402px;top:830px;width:106px;text-align:center;color:rgba(0,0,0,.65);letter-spacing:-0.3px">0.00</div>
<div class="abs" style="left:1508px;top:829px;width:108px;text-align:center"><span style="display:inline-block;height:22px;line-height:20px;padding:0 7px;margin-right:8px;font-size:12px;border-radius:2px;background:#fff1f0;border:1px solid #ffa39e;color:#d9202e">未到账</span></div>
<div class="abs t14" style="left:1616px;top:830px;width:165px;text-align:center;color:rgba(0,0,0,.65);letter-spacing:-0.3px">2022-10-30 15:34:44</div>
<div class="abs t14" style="left:1937px;top:830px;width:92px;text-align:center;color:rgba(0,0,0,.65);letter-spacing:-0.6px">USDT</div>
<div class="abs t14" style="left:2029px;top:830px;width:92px;text-align:center;color:rgba(0,0,0,.65)">代理</div>
<div class="abs t14" style="left:2123px;top:830px;width:104px;text-align:center;color:rgba(0,0,0,.65);letter-spacing:-0.4px">Pt_UsdtPay</div>
<div class="abs" style="left:2225px;top:829px;width:105px;text-align:center"><span style="display:inline-block;height:22px;line-height:20px;padding:0 7px;margin-right:8px;font-size:12px;border-radius:2px;background:#fff1f0;border:1px solid #ffa39e;color:#d9202e">等待支付</span></div>
<div class="abs t14" style="left:2352px;top:830px;color:#1aa9a9">用户详情</div>
<div class="abs t14" style="left:2424px;top:830px;color:#1aa9a9">手动补单</div>
<div class="abs" style="left:328px;top:888px;width:16px;height:16px;border:1px solid #d9d9d9;border-radius:2px;background:#fff"></div>
<div class="abs t14" style="left:365px;top:885px;width:57px;text-align:center;color:rgba(0,0,0,.65);letter-spacing:-0.3px">218</div>
<div class="abs t14" style="left:422px;top:885px;width:239px;text-align:center;color:rgba(0,0,0,.65);letter-spacing:-0.3px">DS202210301533561404615541</div>
<div class="abs t14" style="left:661px;top:885px;width:91px;text-align:center;color:rgba(0,0,0,.65)">ceshi</div>
<div class="abs t14" style="left:752px;top:885px;width:128px;text-align:center;color:rgba(0,0,0,.65);letter-spacing:-0.3px">666666</div>
<div class="abs t14" style="left:880px;top:885px;width:91px;text-align:center;color:rgba(0,0,0,.65)">正式会员</div>
<div class="abs t14" style="left:971px;top:885px;width:92px;text-align:center;color:rgba(0,0,0,.65);letter-spacing:-0.3px">12502.25</div>
<div class="abs t14" style="left:1063px;top:885px;width:92px;text-align:center;color:rgba(0,0,0,.65);letter-spacing:-0.3px">19797.30</div>
<div class="abs t14" style="left:1155px;top:885px;width:112px;text-align:center;color:rgba(0,0,0,.65);letter-spacing:-0.3px">3000.00</div>
<div class="abs t14" style="left:1267px;top:885px;width:135px;text-align:center;color:rgba(0,0,0,.65);letter-spacing:-0.3px">0.00</div>
<div class="abs t14" style="left:1402px;top:885px;width:106px;text-align:center;color:rgba(0,0,0,.65);letter-spacing:-0.3px">0.00</div>
<div class="abs" style="left:1508px;top:884px;width:108px;text-align:center"><span style="display:inline-block;height:22px;line-height:20px;padding:0 7px;margin-right:8px;font-size:12px;border-radius:2px;background:#fff1f0;border:1px solid #ffa39e;color:#d9202e">未到账</span></div>
<div class="abs t14" style="left:1616px;top:885px;width:165px;text-align:center;color:rgba(0,0,0,.65);letter-spacing:-0.3px">2022-10-30 15:33:56</div>
<div class="abs t14" style="left:1937px;top:885px;width:92px;text-align:center;color:rgba(0,0,0,.65);letter-spacing:-0.6px">USDT</div>
<div class="abs t14" style="left:2029px;top:885px;width:92px;text-align:center;color:rgba(0,0,0,.65)">代理</div>
<div class="abs t14" style="left:2123px;top:885px;width:104px;text-align:center;color:rgba(0,0,0,.65);letter-spacing:-0.4px">Pt_UsdtPay</div>
<div class="abs" style="left:2225px;top:884px;width:105px;text-align:center"><span style="display:inline-block;height:22px;line-height:20px;padding:0 7px;margin-right:8px;font-size:12px;border-radius:2px;background:#fff1f0;border:1px solid #ffa39e;color:#d9202e">等待支付</span></div>
<div class="abs t14" style="left:2352px;top:885px;color:#1aa9a9">用户详情</div>
<div class="abs t14" style="left:2424px;top:885px;color:#1aa9a9">手动补单</div>
<div class="abs" style="left:328px;top:943px;width:16px;height:16px;border:1px solid #d9d9d9;border-radius:2px;background:#fff"></div>
<div class="abs t14" style="left:365px;top:940px;width:57px;text-align:center;color:rgba(0,0,0,.65);letter-spacing:-0.3px">217</div>
<div class="abs t14" style="left:422px;top:940px;width:239px;text-align:center;color:rgba(0,0,0,.65);letter-spacing:-0.3px">DS202210301529468892423126</div>
<div class="abs t14" style="left:661px;top:940px;width:91px;text-align:center;color:rgba(0,0,0,.65)">ceshi</div>
<div class="abs t14" style="left:752px;top:940px;width:128px;text-align:center;color:rgba(0,0,0,.65);letter-spacing:-0.3px">666666</div>
<div class="abs t14" style="left:880px;top:940px;width:91px;text-align:center;color:rgba(0,0,0,.65)">正式会员</div>
<div class="abs t14" style="left:971px;top:940px;width:92px;text-align:center;color:rgba(0,0,0,.65);letter-spacing:-0.3px">12502.25</div>
<div class="abs t14" style="left:1063px;top:940px;width:92px;text-align:center;color:rgba(0,0,0,.65);letter-spacing:-0.3px">19797.30</div>
<div class="abs t14" style="left:1155px;top:940px;width:112px;text-align:center;color:rgba(0,0,0,.65);letter-spacing:-0.3px">30000.00</div>
<div class="abs t14" style="left:1267px;top:940px;width:135px;text-align:center;color:rgba(0,0,0,.65);letter-spacing:-0.3px">0.00</div>
<div class="abs t14" style="left:1402px;top:940px;width:106px;text-align:center;color:rgba(0,0,0,.65);letter-spacing:-0.3px">0.00</div>
<div class="abs" style="left:1508px;top:939px;width:108px;text-align:center"><span style="display:inline-block;height:22px;line-height:20px;padding:0 7px;margin-right:8px;font-size:12px;border-radius:2px;background:#fff1f0;border:1px solid #ffa39e;color:#d9202e">未到账</span></div>
<div class="abs t14" style="left:1616px;top:940px;width:165px;text-align:center;color:rgba(0,0,0,.65);letter-spacing:-0.3px">2022-10-30 15:29:46</div>
<div class="abs t14" style="left:1937px;top:940px;width:92px;text-align:center;color:rgba(0,0,0,.65);letter-spacing:-0.6px">USDT</div>
<div class="abs t14" style="left:2029px;top:940px;width:92px;text-align:center;color:rgba(0,0,0,.65)">代理</div>
<div class="abs t14" style="left:2123px;top:940px;width:104px;text-align:center;color:rgba(0,0,0,.65);letter-spacing:-0.4px">Pt_UsdtPay</div>
<div class="abs" style="left:2225px;top:939px;width:105px;text-align:center"><span style="display:inline-block;height:22px;line-height:20px;padding:0 7px;margin-right:8px;font-size:12px;border-radius:2px;background:#fff1f0;border:1px solid #ffa39e;color:#d9202e">等待支付</span></div>
<div class="abs t14" style="left:2352px;top:940px;color:#1aa9a9">用户详情</div>
<div class="abs t14" style="left:2424px;top:940px;color:#1aa9a9">手动补单</div>
<div class="abs" style="left:328px;top:998px;width:16px;height:16px;border:1px solid #d9d9d9;border-radius:2px;background:#fff"></div>
<div class="abs t14" style="left:365px;top:995px;width:57px;text-align:center;color:rgba(0,0,0,.65);letter-spacing:-0.3px">216</div>
<div class="abs t14" style="left:422px;top:995px;width:239px;text-align:center;color:rgba(0,0,0,.65);letter-spacing:-0.3px">DS202210301528253273095830</div>
<div class="abs t14" style="left:661px;top:995px;width:91px;text-align:center;color:rgba(0,0,0,.65)">ceshi</div>
<div class="abs t14" style="left:752px;top:995px;width:128px;text-align:center;color:rgba(0,0,0,.65);letter-spacing:-0.3px">666666</div>
<div class="abs t14" style="left:880px;top:995px;width:91px;text-align:center;color:rgba(0,0,0,.65)">正式会员</div>
<div class="abs t14" style="left:971px;top:995px;width:92px;text-align:center;color:rgba(0,0,0,.65);letter-spacing:-0.3px">12502.25</div>
<div class="abs t14" style="left:1063px;top:995px;width:92px;text-align:center;color:rgba(0,0,0,.65);letter-spacing:-0.3px">19797.30</div>
<div class="abs t14" style="left:1155px;top:995px;width:112px;text-align:center;color:rgba(0,0,0,.65);letter-spacing:-0.3px">3000.00</div>
<div class="abs t14" style="left:1267px;top:995px;width:135px;text-align:center;color:rgba(0,0,0,.65);letter-spacing:-0.3px">0.00</div>
<div class="abs t14" style="left:1402px;top:995px;width:106px;text-align:center;color:rgba(0,0,0,.65);letter-spacing:-0.3px">0.00</div>
<div class="abs" style="left:1508px;top:994px;width:108px;text-align:center"><span style="display:inline-block;height:22px;line-height:20px;padding:0 7px;margin-right:8px;font-size:12px;border-radius:2px;background:#fff1f0;border:1px solid #ffa39e;color:#d9202e">未到账</span></div>
<div class="abs t14" style="left:1616px;top:995px;width:165px;text-align:center;color:rgba(0,0,0,.65);letter-spacing:-0.3px">2022-10-30 15:28:25</div>
<div class="abs t14" style="left:1937px;top:995px;width:92px;text-align:center;color:rgba(0,0,0,.65);letter-spacing:-0.6px">USDT</div>
<div class="abs t14" style="left:2029px;top:995px;width:92px;text-align:center;color:rgba(0,0,0,.65)">代理</div>
<div class="abs t14" style="left:2123px;top:995px;width:104px;text-align:center;color:rgba(0,0,0,.65);letter-spacing:-0.4px">Pt_UsdtPay</div>
<div class="abs" style="left:2225px;top:994px;width:105px;text-align:center"><span style="display:inline-block;height:22px;line-height:20px;padding:0 7px;margin-right:8px;font-size:12px;border-radius:2px;background:#fff1f0;border:1px solid #ffa39e;color:#d9202e">等待支付</span></div>
<div class="abs t14" style="left:2352px;top:995px;color:#1aa9a9">用户详情</div>
<div class="abs t14" style="left:2424px;top:995px;color:#1aa9a9">手动补单</div>
<div class="abs" style="left:328px;top:1053px;width:16px;height:16px;border:1px solid #d9d9d9;border-radius:2px;background:#fff"></div>
<div class="abs t14" style="left:365px;top:1050px;width:57px;text-align:center;color:rgba(0,0,0,.65);letter-spacing:-0.3px">215</div>
<div class="abs t14" style="left:422px;top:1050px;width:239px;text-align:center;color:rgba(0,0,0,.65);letter-spacing:-0.3px">DS202210301527476002958925</div>
<div class="abs t14" style="left:661px;top:1050px;width:91px;text-align:center;color:rgba(0,0,0,.65)">ceshi</div>
<div class="abs t14" style="left:752px;top:1050px;width:128px;text-align:center;color:rgba(0,0,0,.65);letter-spacing:-0.3px">666666</div>
<div class="abs t14" style="left:880px;top:1050px;width:91px;text-align:center;color:rgba(0,0,0,.65)">正式会员</div>
<div class="abs t14" style="left:971px;top:1050px;width:92px;text-align:center;color:rgba(0,0,0,.65);letter-spacing:-0.3px">12502.25</div>
<div class="abs t14" style="left:1063px;top:1050px;width:92px;text-align:center;color:rgba(0,0,0,.65);letter-spacing:-0.3px">19797.30</div>
<div class="abs t14" style="left:1155px;top:1050px;width:112px;text-align:center;color:rgba(0,0,0,.65);letter-spacing:-0.3px">10.00</div>
<div class="abs t14" style="left:1267px;top:1050px;width:135px;text-align:center;color:rgba(0,0,0,.65);letter-spacing:-0.3px">0.00</div>
<div class="abs t14" style="left:1402px;top:1050px;width:106px;text-align:center;color:rgba(0,0,0,.65);letter-spacing:-0.3px">0.00</div>
<div class="abs" style="left:1508px;top:1049px;width:108px;text-align:center"><span style="display:inline-block;height:22px;line-height:20px;padding:0 7px;margin-right:8px;font-size:12px;border-radius:2px;background:#fff1f0;border:1px solid #ffa39e;color:#d9202e">未到账</span></div>
<div class="abs t14" style="left:1616px;top:1050px;width:165px;text-align:center;color:rgba(0,0,0,.65);letter-spacing:-0.3px">2022-10-30 15:27:47</div>
<div class="abs t14" style="left:1937px;top:1050px;width:92px;text-align:center;color:rgba(0,0,0,.65);letter-spacing:-0.6px">USDT</div>
<div class="abs t14" style="left:2029px;top:1050px;width:92px;text-align:center;color:rgba(0,0,0,.65)">代理</div>
<div class="abs t14" style="left:2123px;top:1050px;width:104px;text-align:center;color:rgba(0,0,0,.65);letter-spacing:-0.4px">Pt_UsdtPay</div>
<div class="abs" style="left:2225px;top:1049px;width:105px;text-align:center"><span style="display:inline-block;height:22px;line-height:20px;padding:0 7px;margin-right:8px;font-size:12px;border-radius:2px;background:#fff1f0;border:1px solid #ffa39e;color:#d9202e">等待支付</span></div>
<div class="abs t14" style="left:2352px;top:1050px;color:#1aa9a9">用户详情</div>
<div class="abs t14" style="left:2424px;top:1050px;color:#1aa9a9">手动补单</div>
<div class="abs" style="left:305px;top:1088px;width:2196px;height:15px;background:#b3f1ea"></div>
<svg class="abs" style="left:309px;top:1090px" width="8" height="11" viewBox="0 0 8 11"><path d="M7.5 .5V10.5L.5 5.5z" fill="#17bcbc"/></svg>
<svg class="abs" style="left:2489px;top:1090px" width="8" height="11" viewBox="0 0 8 11"><path d="M.5 .5V10.5L7.5 5.5z" fill="#17bcbc"/></svg>
<div class="abs" style="left:2008px;top:1119px;width:32px;height:32px;border:1px solid #d9d9d9;border-radius:4px;background:#fff;text-align:center;line-height:30px;"><svg style="margin-top:10px" width="8" height="11" viewBox="0 0 8 11"><path d="M6.5 1L1.5 5.5l5 4.5" fill="none" stroke="#bfbfbf" stroke-width="1.2"/></svg></div>
<div class="abs" style="left:2048px;top:1119px;width:32px;height:32px;border:1px solid #5a9fa1;border-radius:4px;background:#fff;text-align:center;line-height:30px;color:#3aaeb4">1</div>
<div class="abs" style="left:2088px;top:1119px;width:32px;height:32px;border:1px solid #d9d9d9;border-radius:4px;background:#fff;text-align:center;line-height:30px;color:rgba(0,0,0,.75)">2</div>
<div class="abs" style="left:2128px;top:1119px;width:32px;height:32px;border:1px solid #d9d9d9;border-radius:4px;background:#fff;text-align:center;line-height:30px;color:rgba(0,0,0,.75)">3</div>
<div class="abs" style="left:2175px;top:1133px;width:18px;height:4px"><svg style="display:block" width="18" height="4" viewBox="0 0 18 4"><g fill="#bfbfbf"><circle cx="2" cy="2" r="1.5"/><circle cx="9" cy="2" r="1.5"/><circle cx="16" cy="2" r="1.5"/></g></svg></div>
<div class="abs" style="left:2208px;top:1119px;width:32px;height:32px;border:1px solid #d9d9d9;border-radius:4px;background:#fff;text-align:center;line-height:30px;color:rgba(0,0,0,.75)">23</div>
<div class="abs" style="left:2248px;top:1119px;width:32px;height:32px;border:1px solid #d9d9d9;border-radius:4px;background:#fff;text-align:center;line-height:30px;"><svg style="margin-top:10px" width="8" height="11" viewBox="0 0 8 11"><path d="M1.5 1l5 4.5-5 4.5" fill="none" stroke="#555" stroke-width="1.2"/></svg></div>
<div class="abs" style="left:2296px;top:1119px;width:89px;height:32px;border:1px solid #d9d9d9;border-radius:2px;background:#fff"></div>
<div class="abs t14" style="left:2308px;top:1124px;color:rgba(0,0,0,.75)">10 条/页</div>
<svg class="abs" style="left:2361px;top:1131px" width="11" height="8" viewBox="0 0 11 8"><path d="M1 1.5l4.5 5 4.5-5" fill="none" stroke="#bfbfbf" stroke-width="1.1"/></svg>
<div class="abs t14" style="left:2393px;top:1124px;color:rgba(0,0,0,.75)">跳至</div>
<div class="abs" style="left:2429px;top:1119px;width:50px;height:32px;border:1px solid #d9d9d9;border-radius:2px;background:#fff"></div>
<div class="abs t14" style="left:2487px;top:1124px;color:rgba(0,0,0,.75)">页</div>
<svg class="abs" style="left:1130px;top:502px;z-index:4" width="300" height="300" viewBox="0 0 300 300"><circle cx="150.4" cy="150.2" r="140" fill="none" stroke="#e60012" stroke-width="5"/><text x="40.0" y="174.5" transform="rotate(-102.4 40.0 174.5)" text-anchor="middle" dominant-baseline="central" font-family="Liberation Sans" font-weight="bold" font-style="italic" font-size="26" fill="#e60012">w</text><text x="38.9" y="139.9" transform="rotate(-84.7 38.9 139.9)" text-anchor="middle" dominant-baseline="central" font-family="Liberation Sans" font-weight="bold" font-style="italic" font-size="26" fill="#e60012">w</text><text x="44.3" y="108.6" transform="rotate(-68.6 44.3 108.6)" text-anchor="middle" dominant-baseline="central" font-family="Liberation Sans" font-weight="bold" font-style="italic" font-size="26" fill="#e60012">w</text><text x="55.1" y="84.0" transform="rotate(-55.2 55.1 84.0)" text-anchor="middle" dominant-baseline="central" font-family="Liberation Sans" font-weight="bold" font-style="italic" font-size="26" fill="#e60012">.</text><text x="79.9" y="58.0" transform="rotate(-37.4 79.9 58.0)" text-anchor="middle" dominant-baseline="central" font-family="Liberation Sans" font-weight="bold" font-style="italic" font-size="26" fill="#e60012">5</text><text x="106.9" y="41.6" transform="rotate(-21.8 106.9 41.6)" text-anchor="middle" dominant-baseline="central" font-family="Liberation Sans" font-weight="bold" font-style="italic" font-size="26" fill="#e60012">1</text><text x="139.5" y="34.7" transform="rotate(-5.4 139.5 34.7)" text-anchor="middle" dominant-baseline="central" font-family="Liberation Sans" font-weight="bold" font-style="italic" font-size="26" fill="#e60012">5</text><text x="169.8" y="38.9" transform="rotate(9.9 169.8 38.9)" text-anchor="middle" dominant-baseline="central" font-family="Liberation Sans" font-weight="bold" font-style="italic" font-size="26" fill="#e60012">y</text><text x="200.4" y="50.0" transform="rotate(26.5 200.4 50.0)" text-anchor="middle" dominant-baseline="central" font-family="Liberation Sans" font-weight="bold" font-style="italic" font-size="26" fill="#e60012">m</text><text x="226.7" y="62.8" transform="rotate(41.1 226.7 62.8)" text-anchor="middle" dominant-baseline="central" font-family="Liberation Sans" font-weight="bold" font-style="italic" font-size="26" fill="#e60012">.</text><text x="246.4" y="92.5" transform="rotate(59.0 246.4 92.5)" text-anchor="middle" dominant-baseline="central" font-family="Liberation Sans" font-weight="bold" font-style="italic" font-size="26" fill="#e60012">c</text><text x="259.0" y="122.7" transform="rotate(75.8 259.0 122.7)" text-anchor="middle" dominant-baseline="central" font-family="Liberation Sans" font-weight="bold" font-style="italic" font-size="26" fill="#e60012">o</text><text x="262.4" y="152.0" transform="rotate(90.9 262.4 152.0)" text-anchor="middle" dominant-baseline="central" font-family="Liberation Sans" font-weight="bold" font-style="italic" font-size="26" fill="#e60012">m</text><text x="91.8" y="261.8" transform="rotate(27.7 91.8 261.8)" text-anchor="middle" dominant-baseline="central" font-family="Liberation Sans" font-weight="bold" font-style="italic" font-size="14" fill="#e60012">5</text><text x="105.2" y="267.8" transform="rotate(21.0 105.2 267.8)" text-anchor="middle" dominant-baseline="central" font-family="Liberation Sans" font-weight="bold" font-style="italic" font-size="14" fill="#e60012">1</text><text x="119.9" y="272.5" transform="rotate(14.0 119.9 272.5)" text-anchor="middle" dominant-baseline="central" font-family="Liberation Sans" font-weight="bold" font-style="italic" font-size="14" fill="#e60012">5</text><text x="135.0" y="275.3" transform="rotate(7.0 135.0 275.3)" text-anchor="middle" dominant-baseline="central" font-family="Liberation Sans" font-weight="bold" font-style="italic" font-size="14" fill="#e60012">y</text><text x="150.4" y="276.2" transform="rotate(0.0 150.4 276.2)" text-anchor="middle" dominant-baseline="central" font-family="Liberation Sans" font-weight="bold" font-style="italic" font-size="14" fill="#e60012">m</text><text x="163.6" y="275.5" transform="rotate(-6.0 163.6 275.5)" text-anchor="middle" dominant-baseline="central" font-family="Liberation Sans" font-weight="bold" font-style="italic" font-size="14" fill="#e60012">.</text><text x="178.7" y="273.0" transform="rotate(-13.0 178.7 273.0)" text-anchor="middle" dominant-baseline="central" font-family="Liberation Sans" font-weight="bold" font-style="italic" font-size="14" fill="#e60012">c</text><text x="192.5" y="269.0" transform="rotate(-19.5 192.5 269.0)" text-anchor="middle" dominant-baseline="central" font-family="Liberation Sans" font-weight="bold" font-style="italic" font-size="14" fill="#e60012">o</text><text x="204.6" y="263.9" transform="rotate(-25.5 204.6 263.9)" text-anchor="middle" dominant-baseline="central" font-family="Liberation Sans" font-weight="bold" font-style="italic" font-size="14" fill="#e60012">m</text></svg>
<div class="abs" style="left:1207px;top:630px;font-family:'Liberation Sans',sans-serif;font-weight:bold;font-size:38px;line-height:46px;color:#e60012;white-space:nowrap;z-index:4;letter-spacing:1px">515<span style="font-family:'Liberation Serif',serif;font-weight:600;margin-left:4px;letter-spacing:4px">源码</span></div>
<div class="abs" style="left:1206px;top:706px;font-family:'Liberation Sans',sans-serif;font-weight:bold;font-size:27px;line-height:32px;color:#e60012;white-space:nowrap;z-index:4;letter-spacing:0px">515ym. com</div>
<div id="vs"><svg class="abs" style="left:2px;top:3px" width="6" height="4" viewBox="0 0 6 4"><path d="M3 0L6 4H0z" fill="#20b5b5"/></svg><svg class="abs" style="left:2px;top:1297px" width="6" height="4" viewBox="0 0 6 4"><path d="M0 0H6L3 4z" fill="#20b5b5"/></svg></div>
<div id="gear"><svg class="abs" style="left:9px;top:9px" width="22" height="23" viewBox="0 0 22 23"><g fill="none" stroke="#fff" stroke-width="1.6" stroke-linejoin="round"><path d="M8.71 1.56 L13.29 1.56 L13.85 4.45 L15.68 5.51 L18.46 4.54 L20.75 8.52 L18.53 10.44 L18.53 12.56 L20.75 14.48 L18.46 18.46 L15.68 17.49 L13.85 18.55 L13.29 21.44 L8.71 21.44 L8.15 18.55 L6.32 17.49 L3.54 18.46 L1.25 14.48 L3.47 12.56 L3.47 10.44 L1.25 8.52 L3.54 4.54 L6.32 5.51 L8.15 4.45Z"/><circle cx="11" cy="11.5" r="3.2"/></g></svg></div>
</body></html>
